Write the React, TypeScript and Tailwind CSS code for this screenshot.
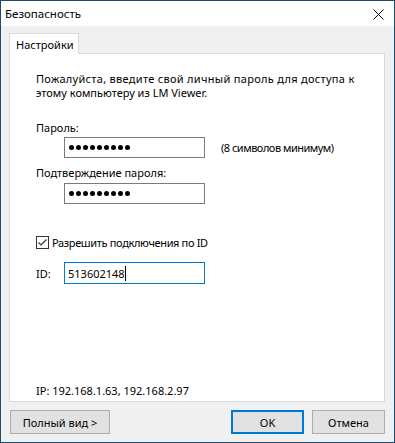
import React from "react";

const font = { fontFamily: '"Noto Sans", "Open Sans", sans-serif' };

function Dots() {
  return (
    <div className="flex items-center gap-[2px] pl-[4px]">
      {Array.from({ length: 9 }).map((_, i) => (
        <span key={i} className="block w-[5px] h-[5px] rounded-full bg-black" />
      ))}
    </div>
  );
}

export default function App() {
  return (
    <div
      className="w-[395px] h-[443px] border border-[#1e4b6b] bg-[#f0f0f0] flex flex-col text-[11px] text-black"
      style={font}
    >
      {/* Title bar */}
      <div className="h-[25px] bg-white flex items-center justify-between pl-[4px] pr-[10px] shrink-0">
        <span className="text-[11.5px] leading-[15px]">Безопасность</span>
        <svg width="11" height="11" viewBox="0 0 11 11" className="mt-[1px]">
          <path d="M0.5 0.5 L10.5 10.5 M10.5 0.5 L0.5 10.5" stroke="#000" strokeWidth="1" />
        </svg>
      </div>

      {/* Body */}
      <div className="flex-1 flex flex-col pl-[8px] pt-[7px] pb-[8px]">
        {/* Tab */}
        <div className="relative z-10 -mb-px w-[70px] h-[21px] bg-white border border-b-0 border-[#d9d9d9] flex items-center pl-[6px] leading-[15px]">
          Настройки
        </div>
        {/* Panel */}
        <div className="w-[376px] flex-1 bg-white border border-[#d9d9d9] flex flex-col pl-[26px] pt-[18px] pb-[3px]">
          <div className="leading-[14px] whitespace-nowrap">
            <div className="tracking-[0.3px]">Пожалуйста, введите свой личный пароль для доступа к</div>
            <div>этому компьютеру из LM Viewer.</div>
          </div>

          <div className="mt-[20px] leading-[15px]">Пароль:</div>
          <div className="mt-[2px] flex items-center">
            <div className="ml-[28px] w-[141px] h-[21px] border border-[#7a7a7a] flex items-center">
              <Dots />
            </div>
            <span className="ml-[16px] leading-[15px] tracking-[-0.5px]">(8 символов минимум)</span>
          </div>

          <div className="mt-[7px] leading-[15px]">Подтверждение пароля:</div>
          <div className="mt-[3px] flex items-center">
            <div className="ml-[28px] w-[141px] h-[21px] border border-[#7a7a7a] flex items-center">
              <Dots />
            </div>
          </div>

          <div className="mt-[31px] flex items-center">
            <svg width="13" height="13" viewBox="0 0 13 13">
              <rect x="0.5" y="0.5" width="12" height="12" fill="#fff" stroke="#333" />
              <path d="M2.5 6.5 L5 9 L10.5 3.5" fill="none" stroke="#333" strokeWidth="1.2" />
            </svg>
            <span className="ml-[3px] leading-[15px] tracking-[-0.35px]">Разрешить подключения по ID</span>
          </div>

          <div className="mt-[12px] flex items-center">
            <span className="w-[28px] leading-[15px]">ID:</span>
            <div className="w-[141px] h-[22px] border border-[#0078d7] flex items-center pl-[3px]">
              <span className="leading-[15px]">513602148</span>
              <span className="block w-px h-[15px] bg-black" />
            </div>
          </div>

          <div className="mt-auto leading-[15px]">IP: 192.168.1.63, 192.168.2.97</div>
        </div>

        {/* Buttons */}
        <div className="mt-[8px] flex items-center pr-[9px]">
          <button className="ml-[1px] w-[100px] h-[24px] bg-[#e1e1e1] border border-[#adadad] leading-[15px]">
            Полный вид &gt;
          </button>
          <div className="flex-1" />
          <button className="w-[73px] h-[24px] bg-[#e1e1e1] border-2 border-[#0078d7] leading-[15px]">
            OK
          </button>
          <button className="ml-[8px] w-[73px] h-[24px] bg-[#e1e1e1] border border-[#adadad] leading-[15px]">
            Отмена
          </button>
        </div>
      </div>
    </div>
  );
}
